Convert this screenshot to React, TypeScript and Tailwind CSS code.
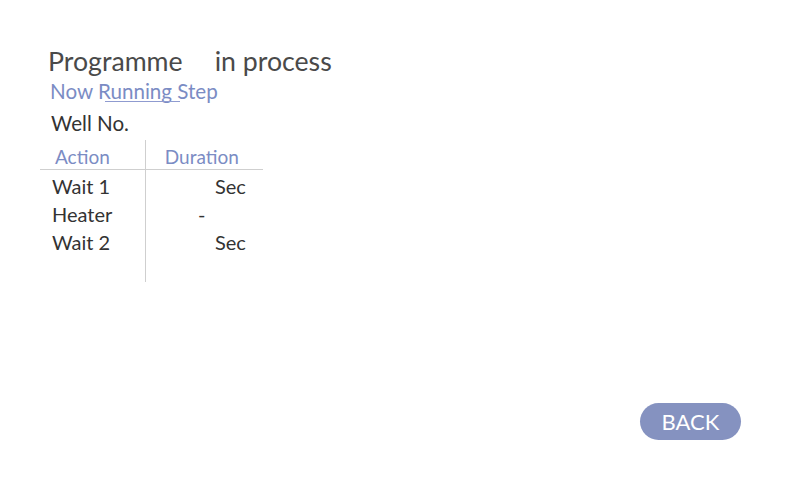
import React from "react";

export default function App() {
  const rows = [
    { a: "Wait 1", d: "Sec", pad: "pl-[68px]" },
    { a: "Heater", d: "-", pad: "pl-[51px]" },
    { a: "Wait 2", d: "Sec", pad: "pl-[68px]" },
  ];
  return (
    <div className="w-[800px] h-[480px] bg-white relative overflow-hidden" style={{ fontFamily: "Lato, 'Noto Sans', sans-serif" }}>
      <div className="pt-[44px] pl-[48px]">
        <div className="text-[26.7px] leading-[34px] text-[#4a4a4a] flex">
          <span>Programme</span>
          <span className="ml-[32px]">in process</span>
        </div>
        <div className="text-[20.6px] leading-[26px] text-[#7b8cc4] ml-[2px] relative w-fit">
          Now Running Step
          <div className="absolute left-[55px] top-[23px] w-[75px] h-px bg-[#8f9bd0]" />
        </div>
        <div className="text-[20.6px] leading-[26px] text-[#333333] ml-[3px] mt-[6px]">Well No.</div>
      </div>
      <div className="ml-[40px] mt-[4px] w-[223px] relative">
        <div className="absolute left-[105px] top-0 w-px h-[142px] bg-[#cfcfcf]" />
        <div className="flex h-[30px] items-end text-[19px] leading-[24px] text-[#7b8cc4] border-b border-[#cfcfcf]">
          <span className="ml-[15px]">Action</span>
          <span className="ml-[55px]">Duration</span>
        </div>
        <div className="pt-[2px]">
          {rows.map((r) => (
            <div key={r.a} className="flex h-[28px] items-center text-[20px] text-[#333333]">
              <span className="ml-[12px] w-[95px]">{r.a}</span>
              <span className={r.pad}>{r.d}</span>
            </div>
          ))}
        </div>
      </div>
      <button className="absolute left-[640px] top-[403px] w-[101px] h-[37px] rounded-full bg-[#8592c0] text-white text-[22px] leading-none">
        BACK
      </button>
    </div>
  );
}
